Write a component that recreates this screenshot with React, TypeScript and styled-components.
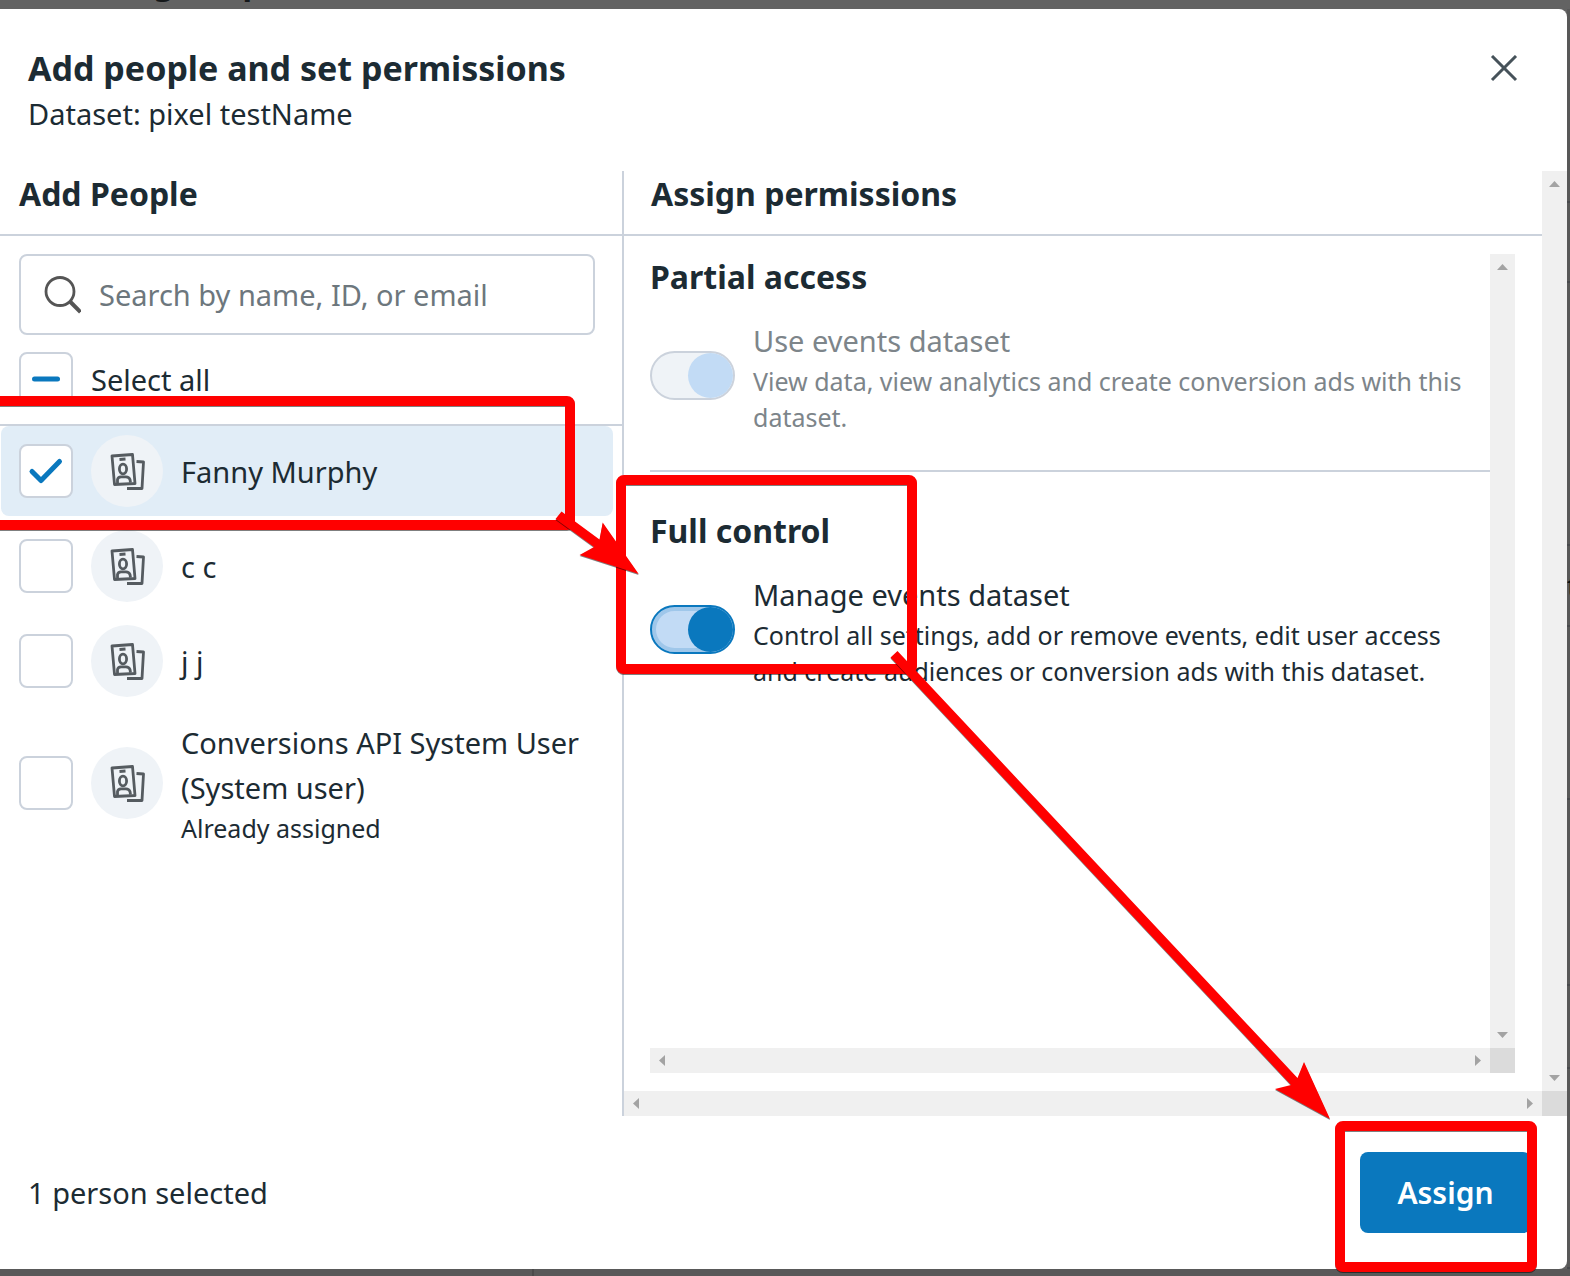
import React, { useId, useState } from "react";
import styled, { createGlobalStyle, css } from "styled-components";

const ink = "#1c2b33";
const line = "#cbd2dc";
const blue = "#0a78be";

const GlobalStyle = createGlobalStyle`
  *, *::before, *::after { box-sizing: border-box; }
  body {
    margin: 0;
    background: #636363;
    color: ${ink};
    font-family: "Noto Sans", "Open Sans", sans-serif;
    font-size: 29px;
    line-height: 45px;
  }
  h1, h2, h3, p { margin: 0; }
`;

const Screen = styled.div`
  position: relative;
  display: grid;
  grid-template-columns: minmax(0, 1fr) 3px;
  grid-template-rows: 9px minmax(0, 1fr) 7px;
  height: 100vh;
  overflow: hidden;
`;

const PageBehindTop = styled.div`
  grid-column: 1 / -1;
  display: flex;
  align-items: flex-end;
  padding-left: 90px;
  overflow: hidden;
  color: #15181a;
  font-size: 32px;
  font-weight: 700;
  line-height: 54px;
`;

const PageBehindSide = styled.div`
  display: flex;
  flex-direction: column;
  overflow: hidden;
  background: #585858;
`;

const BehindRow = styled.div<{ $size: number }>`
  display: flex;
  flex: ${(p) => p.$size} 0 0;
  align-items: center;
  min-height: 0;
  overflow: hidden;
  border-bottom: 2px solid #484a4d;
  color: #0b1013;
  font-size: 29px;
`;

const PageBehindBottom = styled.div`
  grid-column: 1 / -1;
  display: grid;
  grid-template-columns: 534px 1fr;
  background: #595959;
`;

const BehindColumn = styled.div`
  border-right: 2px solid #4b4b4b;
`;

const Dialog = styled.section`
  display: flex;
  flex-direction: column;
  min-height: 0;
  overflow: hidden;
  background: #fff;
  border-radius: 0 8px 8px 0;
`;

const DialogHeader = styled.header`
  display: flex;
  justify-content: space-between;
  align-items: flex-start;
  height: 162px;
  flex: none;
  padding: 37px 45px 0 28px;
`;

const DialogTitle = styled.h1`
  font-size: 34px;
  font-weight: 700;
  line-height: 45px;
`;

const CloseButton = styled.button`
  display: grid;
  place-items: center;
  width: 36px;
  height: 45px;
  padding: 0;
  border: 0;
  background: none;
  cursor: pointer;
`;

const Body = styled.div`
  display: grid;
  grid-template-columns: 622px minmax(0, 1fr);
  flex: 1;
  min-height: 0;
`;

const People = styled.section`
  display: flex;
  flex-direction: column;
`;

const PanelHeading = styled.h2<{ $indent: number }>`
  height: 65px;
  flex: none;
  padding-left: ${(p) => p.$indent}px;
  border-bottom: 2px solid ${line};
  font-size: 32px;
  font-weight: 700;
  line-height: 46px;
`;

const PeopleTools = styled.div`
  display: flex;
  flex-direction: column;
  gap: 17px;
  height: 190px;
  flex: none;
  padding: 18px 27px 0 19px;
  border-bottom: 2px solid ${line};
`;

const SearchField = styled.label`
  display: flex;
  align-items: center;
  gap: 18px;
  height: 81px;
  flex: none;
  padding: 0 22px;
  border: 2px solid ${line};
  border-radius: 8px;
`;

const SearchInput = styled.input`
  flex: 1;
  min-width: 0;
  height: 45px;
  padding: 0;
  border: 0;
  outline: 0;
  background: none;
  color: ${ink};
  font: inherit;
  &::placeholder { color: #6d777d; opacity: 1; }
`;

const SelectAll = styled.label`
  display: flex;
  align-items: center;
  gap: 18px;
`;

const PeopleList = styled.ul`
  display: flex;
  flex-direction: column;
  gap: 5px;
  margin: 0;
  padding: 0 9px 0 1px;
  list-style: none;
`;

const PersonRow = styled.label<{ $selected: boolean }>`
  display: flex;
  align-items: center;
  gap: 18px;
  padding: 9px 18px;
  border-radius: 8px;
  background: ${(p) => (p.$selected ? "#e1edf7" : "transparent")};
`;

const Avatar = styled.span`
  display: grid;
  place-items: center;
  width: 72px;
  height: 72px;
  flex: none;
  border-radius: 50%;
  background: #eff3f7;
`;

const PersonText = styled.span`
  display: flex;
  flex-direction: column;
`;

const Note = styled.span`
  font-size: 25px;
  line-height: 36px;
`;

const TickFrame = styled.span`
  display: grid;
  place-items: center;
  width: 54px;
  height: 54px;
  flex: none;
  & > * { grid-area: 1 / 1; }
`;

const TickInput = styled.input`
  appearance: none;
  width: 54px;
  height: 54px;
  margin: 0;
  border: 2px solid ${line};
  border-radius: 8px;
  background: #fff;
`;

const TickMark = styled.svg`
  position: relative;
  pointer-events: none;
`;

const Permissions = styled.section`
  display: grid;
  grid-template-columns: minmax(0, 1fr) 25px;
  grid-template-rows: minmax(0, 1fr) 25px;
  min-height: 0;
  border-left: 2px solid ${line};
`;

const PermissionsMain = styled.div`
  display: flex;
  flex-direction: column;
  min-height: 0;
`;

const PermissionsScroller = styled.div`
  display: grid;
  grid-template-columns: minmax(0, 1fr) 25px;
  grid-template-rows: minmax(0, 1fr) 25px;
  flex: 1;
  min-height: 0;
  margin: 18px 27px 18px 26px;
`;

const Track = styled.div<{ $horizontal?: boolean }>`
  display: flex;
  flex-direction: ${(p) => (p.$horizontal ? "row" : "column")};
  justify-content: space-between;
  align-items: center;
  padding: ${(p) => (p.$horizontal ? "0 9px" : "10px 0")};
  background: #f0f0f0;
`;

const Corner = styled.div`
  background: #dbdbdb;
`;

const PermissionGroups = styled.div`
  min-height: 0;
  overflow: hidden;
`;

const PermissionGroup = styled.section<{ $divided?: boolean }>`
  display: flex;
  flex-direction: column;
  gap: 19px;
  padding: 0 0 35px;
  ${(p) =>
    p.$divided &&
    css`
      padding-top: 36px;
      border-top: 2px solid ${line};
    `}
`;

const GroupHeading = styled.h3`
  font-size: 32px;
  font-weight: 700;
  line-height: 45px;
`;

const PermissionRow = styled.label<{ $muted: boolean }>`
  display: grid;
  grid-template-columns: 85px minmax(0, 1fr);
  column-gap: 18px;
  align-items: start;
  color: ${(p) => (p.$muted ? "#7d858a" : ink)};
`;

const Toggle = styled.input`
  appearance: none;
  display: flex;
  justify-content: flex-end;
  width: 85px;
  height: 49px;
  margin: 33px 0 0;
  border: 2px solid ${blue};
  border-radius: 25px;
  background: #c2dbf5;
  box-shadow: inset 0 0 0 4px #9fc7ea;
  &::before {
    content: "";
    width: 45px;
    height: 45px;
    border-radius: 50%;
    background: ${blue};
  }
  &:not(:checked) { justify-content: flex-start; }
  &:disabled {
    border-color: ${line};
    background: #eff3f7;
    box-shadow: none;
  }
  &:disabled::before { background: #c2dbf5; }
`;

const Footer = styled.footer`
  display: flex;
  justify-content: space-between;
  align-items: center;
  height: 153px;
  flex: none;
  padding: 0 36px 0 28px;
`;

const AssignButton = styled.button`
  width: 171px;
  height: 81px;
  border: 0;
  border-radius: 8px;
  background: ${blue};
  color: #fff;
  font: 600 30px/45px "Noto Sans", "Open Sans", sans-serif;
  cursor: pointer;
`;

const Annotations = styled.svg`
  position: absolute;
  top: 0;
  left: 0;
  pointer-events: none;
  overflow: visible;
  & > g { filter: drop-shadow(0 1px 0 rgba(0, 0, 0, 0.5)); }
`;

type Direction = "up" | "down" | "left" | "right";
const trianglePoints: Record<Direction, string> = {
  up: "0,6 11,6 5.5,0",
  down: "0,0 11,0 5.5,6",
  left: "6,0 6,11 0,5.5",
  right: "0,0 0,11 6,5.5",
};

function Triangle({ to }: { to: Direction }) {
  const upright = to === "up" || to === "down";
  const w = upright ? 11 : 6;
  const h = upright ? 6 : 11;
  return (
    <svg width={w} height={h} viewBox={`0 0 ${w} ${h}`}>
      <polygon points={trianglePoints[to]} fill="#a3a3a3" />
    </svg>
  );
}

function Scrollbar({ horizontal }: { horizontal?: boolean }) {
  return (
    <Track $horizontal={horizontal} aria-hidden="true">
      <Triangle to={horizontal ? "left" : "up"} />
      <Triangle to={horizontal ? "right" : "down"} />
    </Track>
  );
}

type TickProps = { checked: boolean; mixed?: boolean; onChange: () => void };

function Tick({ checked, mixed, onChange }: TickProps) {
  return (
    <TickFrame>
      <TickInput
        type="checkbox"
        checked={checked}
        onChange={onChange}
        ref={(el) => {
          if (el) el.indeterminate = !!mixed;
        }}
      />
      {(checked || mixed) && (
        <TickMark width="54" height="54" viewBox="0 0 54 54" fill="none" stroke={blue} strokeWidth="5" strokeLinecap="round" strokeLinejoin="round">
          {mixed ? <path d="M15.500 27H38.500" /> : <path d="M13 27.500L22 36.500L40.500 17.500" />}
        </TickMark>
      )}
    </TickFrame>
  );
}

function BadgeIcon() {
  return (
    <svg width="36" height="37" viewBox="0 0 36 37" fill="none" stroke="#555b60" strokeWidth="2.800" strokeLinejoin="round">
      <path d="M3 3L23.500 1.500L26 30.500L5.500 31.500Z" />
      <path d="M10.500 6.500L16.500 6" />
      <ellipse cx="14" cy="16" rx="3.600" ry="4.800" />
      <path d="M8.500 30V26.500Q9 24 12 23.800H17Q20 24 21 26.500L21.500 29.500" />
      <path d="M27.500 8.500L34.500 9L33 35.500L18 35.500" />
    </svg>
  );
}

function SearchIcon() {
  return (
    <svg width="38" height="38" viewBox="0 0 38 38" fill="none" stroke="#555555" strokeWidth="2.800">
      <circle cx="17" cy="15.500" r="14" />
      <path d="M27 25.500L37.500 36" strokeWidth="4" />
    </svg>
  );
}

const people = [
  { name: "Fanny Murphy" },
  { name: "c c" },
  { name: "j j" },
  { name: "Conversions API System User (System user)", note: "Already assigned" },
];

const behindRows = [
  { size: 194, text: "" },
  { size: 79, text: "" },
  { size: 265, text: "" },
  { size: 80, text: "t" },
  { size: 173, text: "" },
  { size: 186, text: "" },
  { size: 82, text: "" },
  { size: 201, text: "" },
];

type PermissionProps = {
  title: string;
  detail: string;
  checked: boolean;
  disabled?: boolean;
  onChange?: () => void;
};

function Permission({ title, detail, checked, disabled, onChange }: PermissionProps) {
  const id = useId();
  return (
    <PermissionRow $muted={!!disabled} htmlFor={id}>
      <Toggle id={id} type="checkbox" role="switch" checked={checked} disabled={disabled} onChange={() => onChange?.()} />
      <PersonText>
        <span>{title}</span>
        <Note>{detail}</Note>
      </PersonText>
    </PermissionRow>
  );
}

export default function App() {
  const [picked, setPicked] = useState<boolean[]>([true, false, false, false]);
  const [manage, setManage] = useState(true);
  const count = picked.filter(Boolean).length;
  const all = count === picked.length;

  return (
    <>
      <GlobalStyle />
      <Screen>
        <PageBehindTop aria-hidden="true">Assigned partners</PageBehindTop>
        <Dialog role="dialog" aria-labelledby="dialog-title">
          <DialogHeader>
            <div>
              <DialogTitle id="dialog-title">Add people and set permissions</DialogTitle>
              <p>Dataset: pixel testName</p>
            </div>
            <CloseButton type="button" aria-label="Close">
              <svg width="28" height="28" viewBox="0 0 28 28" fill="none" stroke="#46525a" strokeWidth="3">
                <path d="M2 1L26 25M26 1L2 25" />
              </svg>
            </CloseButton>
          </DialogHeader>

          <Body>
            <People>
              <PanelHeading $indent={19}>Add People</PanelHeading>
              <PeopleTools>
                <SearchField>
                  <SearchIcon />
                  <SearchInput type="text" aria-label="Search people" placeholder="Search by name, ID, or email" />
                </SearchField>
                <SelectAll>
                  <Tick checked={all} mixed={count > 0 && !all} onChange={() => setPicked(picked.map(() => !all))} />
                  <span>Select all</span>
                </SelectAll>
              </PeopleTools>
              <PeopleList>
                {people.map((person, i) => (
                  <li key={person.name}>
                    <PersonRow $selected={picked[i]}>
                      <Tick checked={picked[i]} onChange={() => setPicked(picked.map((v, j) => (j === i ? !v : v)))} />
                      <Avatar>
                        <BadgeIcon />
                      </Avatar>
                      <PersonText>
                        <span>{person.name}</span>
                        {person.note && <Note>{person.note}</Note>}
                      </PersonText>
                    </PersonRow>
                  </li>
                ))}
              </PeopleList>
            </People>

            <Permissions>
              <PermissionsMain>
                <PanelHeading $indent={27}>Assign permissions</PanelHeading>
                <PermissionsScroller>
                  <PermissionGroups>
                    <PermissionGroup>
                      <GroupHeading>Partial access</GroupHeading>
                      <Permission
                        title="Use events dataset"
                        detail="View data, view analytics and create conversion ads with this dataset."
                        checked
                        disabled
                      />
                    </PermissionGroup>
                    <PermissionGroup $divided>
                      <GroupHeading>Full control</GroupHeading>
                      <Permission
                        title="Manage events dataset"
                        detail="Control all settings, add or remove events, edit user access and create audiences or conversion ads with this dataset."
                        checked={manage}
                        onChange={() => setManage(!manage)}
                      />
                    </PermissionGroup>
                  </PermissionGroups>
                  <Scrollbar />
                  <Scrollbar horizontal />
                  <Corner />
                </PermissionsScroller>
              </PermissionsMain>
              <Scrollbar />
              <Scrollbar horizontal />
              <Corner />
            </Permissions>
          </Body>

          <Footer>
            <span>{count} person selected</span>
            <AssignButton type="button">Assign</AssignButton>
          </Footer>
        </Dialog>
        <PageBehindSide aria-hidden="true">
          {behindRows.map((row, i) => (
            <BehindRow key={i} $size={row.size}>
              {row.text}
            </BehindRow>
          ))}
        </PageBehindSide>
        <PageBehindBottom aria-hidden="true">
          <BehindColumn />
        </PageBehindBottom>

        <Annotations width="1570" height="1276" viewBox="0 0 1570 1276" aria-hidden="true">
          <g fill="none" stroke="#ff0000" strokeWidth="10">
            <rect x="-20" y="401" width="590" height="124" rx="3" />
            <rect x="621" y="480" width="291" height="189" rx="3" />
            <rect x="1340" y="1126" width="192" height="141" rx="3" />
          </g>
          <g fill="#ff0000">
            <path d="M561.500 511.500L599.500 539.500L602.700 522.500L638.700 574L579.600 555L594 547L555.500 519Z" />
            <path d="M897.500 651L1297.500 1078L1304 1062L1330 1119L1275 1089L1291 1085L890.500 657.500Z" />
          </g>
        </Annotations>
      </Screen>
    </>
  );
}
